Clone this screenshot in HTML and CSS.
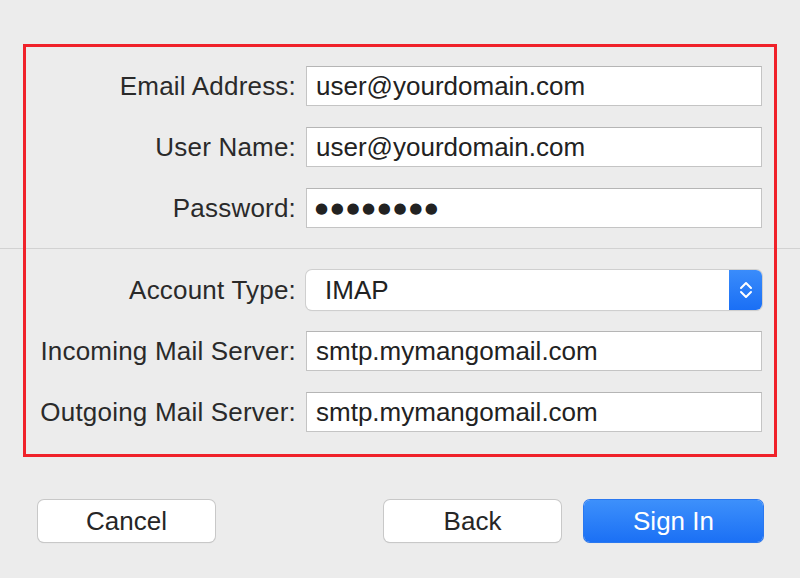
FILE: index.html
```html
<!DOCTYPE html>
<html>
<head>
<meta charset="utf-8">
<link rel="stylesheet" href="styles.css">
</head>
<body>
<div class="page">
  <div class="form">
    <div class="grid">
      <label class="lbl">Email Address:</label>
      <div class="field">user@yourdomain.com</div>
      <label class="lbl">User Name:</label>
      <div class="field">user@yourdomain.com</div>
      <label class="lbl">Password:</label>
      <div class="field pw">●●●●●●●●</div>
    </div>
    <div class="sep"></div>
    <div class="grid">
      <label class="lbl">Account Type:</label>
      <div class="popup">
        <span class="popup-text">IMAP</span>
        <span class="popup-arrows">
          <svg width="16" height="20" viewBox="0 0 16 20"><path d="M3 8 L8 3 L13 8 M3 12 L8 17 L13 12" fill="none" stroke="#fff" stroke-width="2" stroke-linecap="round" stroke-linejoin="round"/></svg>
        </span>
      </div>
      <label class="lbl">Incoming Mail Server:</label>
      <div class="field">smtp.mymangomail.com</div>
      <label class="lbl">Outgoing Mail Server:</label>
      <div class="field">smtp.mymangomail.com</div>
    </div>
  </div>
  <div class="buttons">
    <button class="btn">Cancel</button>
    <div class="right">
      <button class="btn">Back</button>
      <button class="btn primary">Sign In</button>
    </div>
  </div>
  <div class="highlight"></div>
</div>
</body>
</html>
```
FILE: styles.css
```css
html, body {
  margin: 0;
  padding: 0;
}
body {
  background: #ececec;
  font-family: "Liberation Sans", Arial, sans-serif;
  color: #262626;
  width: 800px;
  height: 578px;
  overflow: hidden;
}
.page {
  position: relative;
  height: 578px;
  padding-top: 66px;
  box-sizing: border-box;
}
.grid {
  display: grid;
  grid-template-columns: 296px 456px;
  column-gap: 10px;
  row-gap: 21px;
  grid-auto-rows: 40px;
}
.lbl {
  font-size: 26px;
  line-height: 40px;
  letter-spacing: 0.2px;
  text-align: right;
  white-space: nowrap;
  color: #2a2a2a;
}
.field {
  background: #fff;
  border: 1px solid #c4c4c4;
  border-top-color: #b5b5b5;
  box-sizing: border-box;
  font-size: 26px;
  line-height: 38px;
  padding-left: 9px;
  color: #222;
}
.pw {
  font-family: "DejaVu Sans", sans-serif;
  font-size: 15px;
  letter-spacing: 2.6px;
  padding-left: 8px;
}
.sep {
  height: 1px;
  background: #d2d2d2;
  margin: 20px 0 21px;
}
.popup {
  display: flex;
  background: #fff;
  border-radius: 6px;
  box-shadow: 0 0 0 1px #cfcfcf, 0 1px 1px rgba(0,0,0,0.12);
  overflow: hidden;
}
.popup-text {
  flex: 1;
  font-size: 26px;
  line-height: 40px;
  padding-left: 19px;
  color: #222;
}
.popup-arrows {
  width: 33px;
  background: linear-gradient(#3a8cfb, #1a6ff5);
  display: flex;
  align-items: center;
  justify-content: center;
}
.buttons {
  display: flex;
  justify-content: space-between;
  padding: 0 37px 0 38px;
  margin-top: 68px;
}
.right {
  display: flex;
  gap: 23px;
}
.btn {
  font-family: "Liberation Sans", Arial, sans-serif;
  font-size: 26px;
  width: 177px;
  height: 42px;
  background: #fff;
  border: none;
  border-radius: 6px;
  box-shadow: 0 0 0 1px #c8c8c8, 0 1px 1px rgba(0,0,0,0.18);
  color: #262626;
  padding: 0;
}
.btn.primary {
  width: 179px;
  background: linear-gradient(#3d90fb, #1b70f5);
  color: #fff;
  box-shadow: 0 0 0 1px #2a78f0, 0 1px 1px rgba(0,0,0,0.15);
}
.highlight {
  position: absolute;
  left: 23px;
  top: 44px;
  width: 754px;
  height: 413px;
  border: 3px solid #f0222a;
  box-sizing: border-box;
  pointer-events: none;
}
```
